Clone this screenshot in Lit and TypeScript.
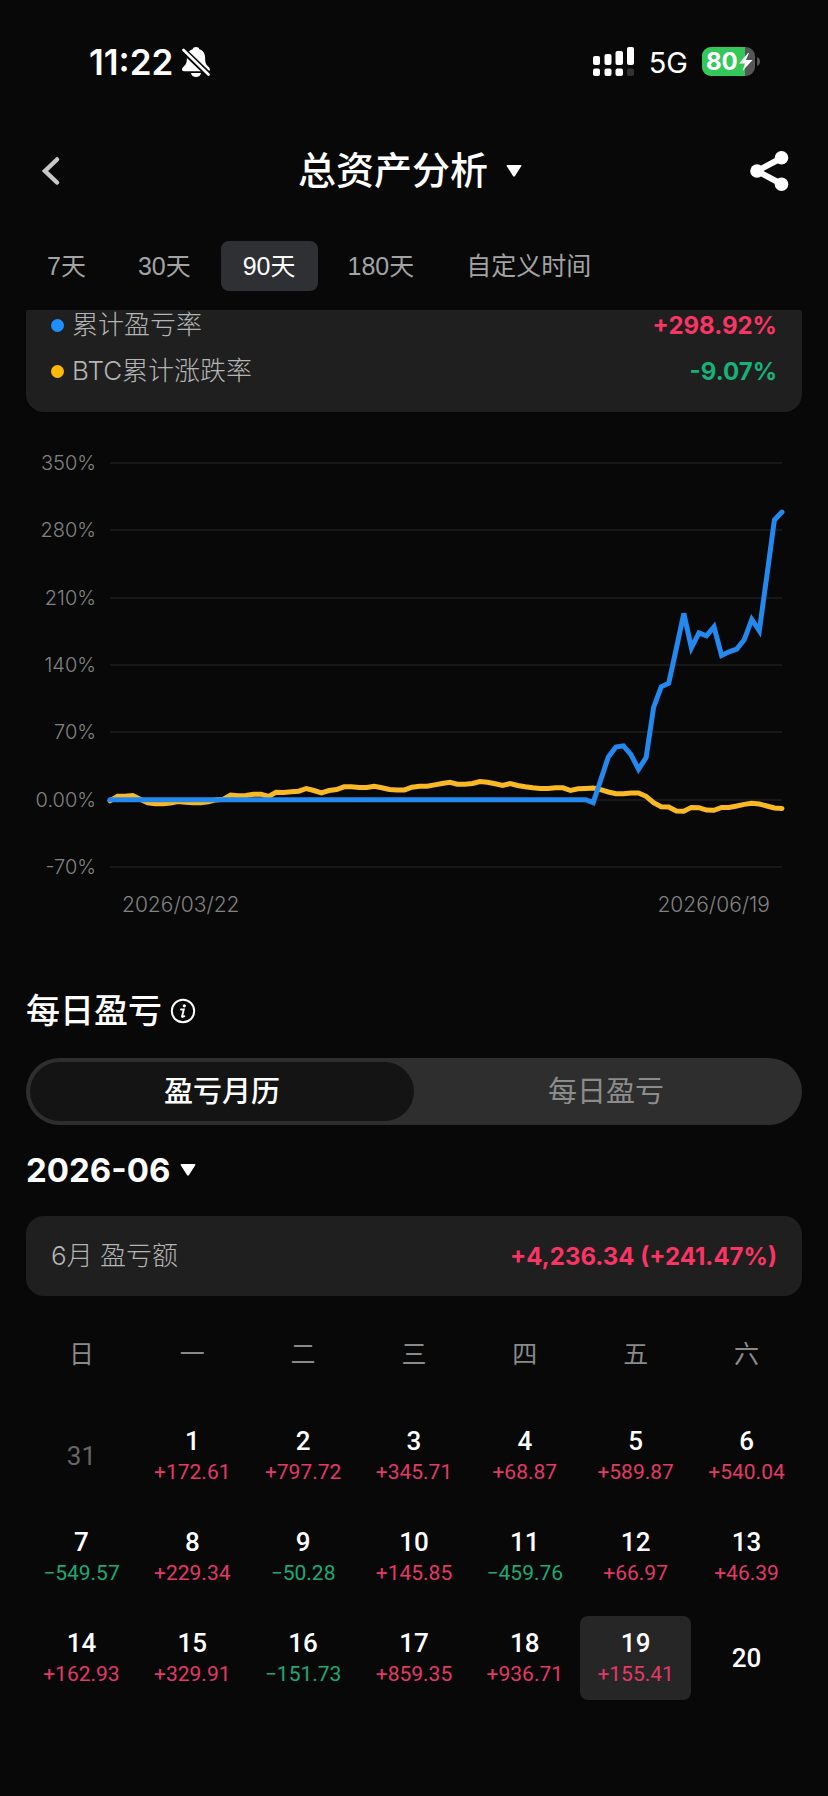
import { LitElement, html, css, svg } from "lit";
import { customElement, state } from "lit/decorators.js";
import { classMap } from "lit/directives/class-map.js";

interface Day {
  day: number;
  amount?: string;
  muted?: boolean;
}

const RANGES = ["7天", "30天", "90天", "180天", "自定义时间"];
const WEEKDAYS = ["日", "一", "二", "三", "四", "五", "六"];

const WEEKS: Day[][] = [
  [
    { day: 31, muted: true },
    { day: 1, amount: "+172.61" },
    { day: 2, amount: "+797.72" },
    { day: 3, amount: "+345.71" },
    { day: 4, amount: "+68.87" },
    { day: 5, amount: "+589.87" },
    { day: 6, amount: "+540.04" },
  ],
  [
    { day: 7, amount: "-549.57" },
    { day: 8, amount: "+229.34" },
    { day: 9, amount: "-50.28" },
    { day: 10, amount: "+145.85" },
    { day: 11, amount: "-459.76" },
    { day: 12, amount: "+66.97" },
    { day: 13, amount: "+46.39" },
  ],
  [
    { day: 14, amount: "+162.93" },
    { day: 15, amount: "+329.91" },
    { day: 16, amount: "-151.73" },
    { day: 17, amount: "+859.35" },
    { day: 18, amount: "+936.71" },
    { day: 19, amount: "+155.41" },
    { day: 20 },
  ],
];

const TICKS = ["350%", "280%", "210%", "140%", "70%", "0.00%", "-70%"];
const MAX = 350;
const MIN = -70;
const PLOT_W = 672;
const PLOT_H = 404;

// One value per day, in percent.
const PNL: number[] = [
  ...new Array(64).fill(0),
  -3, 20.8, 44.4, 54.8, 55.9, 46.8, 31.6, 43.7, 95.8, 117.3, 121.1, 157, 193.6,
  157.9, 173.5, 170.4, 179.7, 149.9, 153.7, 156.5, 166.2, 187.4, 175.6, 233,
  290.8, 298.92,
];
const BTC: number[] = [
  -1.2, 3.6, 3.6, 4.3, 0.5, -3.3, -4.3, -4.3, -3.6, -1.9, -2.6, -3.3, -3.3,
  -2.3, -0.2, 0.5, 4.7, 4, 4.3, 5.7, 5.7, 3.3, 7.8, 7.5, 8.2, 8.8, 11.6, 9.5,
  7.1, 9.5, 10.6, 13.4, 13.4, 12.7, 12.7, 14, 12.3, 10.6, 9.9, 10.2, 13, 14, 14,
  15.4, 16.8, 17.9, 16.1, 16.1, 16.8, 18.9, 18.2, 16.5, 14.7, 16.8, 14.7, 13.4,
  12.3, 11.6, 11.6, 12.3, 12.3, 9.5, 11.3, 11.6, 12, 10.4, 8, 6.2, 6.2, 6.9,
  6.9, 3.5, -3.1, -7.3, -7.6, -11.8, -12.1, -8, -8.3, -10.8, -11.1, -8, -8,
  -6.6, -4.9, -3.8, -4.5, -6.6, -8.7, -9.07,
];

const toPoints = (values: number[]) =>
  values
    .map((v, i) => {
      const x = (i / (values.length - 1)) * PLOT_W;
      const y = ((MAX - v) / (MAX - MIN)) * PLOT_H;
      return `${x.toFixed(1)},${y.toFixed(1)}`;
    })
    .join(" ");

@customElement("status-bar")
export class StatusBar extends LitElement {
  static styles = css`
    :host {
      display: flex;
      align-items: center;
      justify-content: space-between;
      height: 124px;
      padding: 0 68px 0 89px;
      color: #fff;
      font-family: Inter, "Noto Sans CJK SC", sans-serif;
    }
    .left,
    .right {
      display: flex;
      align-items: center;
    }
    .left {
      gap: 9px;
    }
    .time {
      font-size: 35px;
      font-weight: 600;
    }
    .net {
      margin: 0 14px;
      font-size: 29px;
    }
    .bat-text {
      font: 700 24px Inter, sans-serif;
    }
    svg {
      display: block;
    }
  `;

  render() {
    return html`
      <div class="left">
        <span class="time">11:22</span>
        <svg width="28" height="32" viewBox="0 0 28 32" aria-hidden="true">
          <path
            fill="#fff"
            d="M14 1c-1.900 0-3 .9-3.300 2.200C6.500 4.500 4.900 7.600 4.900 12c0 4.800-1 6.500-3.200 8.600C.7 21.700 0 22.700 0 23.600 0 24.700.8 25.300 2 25.300h24c1.200 0 1.900-.6 1.900-1.700 0-.9-.7-1.900-1.700-3-2.200-2.100-3.100-3.800-3.100-8.600 0-4.400-1.600-7.500-5.800-8.800C17 1.900 15.900 1 14 1Z"
          />
          <path fill="#fff" d="M9 27h10c-.4 2.400-2.300 4-5 4s-4.600-1.600-5-4Z" />
          <path d="M1 4 L27 29" stroke="#080808" stroke-width="6" />
          <path
            d="M1.500 4 L26.500 28.500"
            stroke="#fff"
            stroke-width="2.600"
            stroke-linecap="round"
          />
        </svg>
      </div>
      <div class="right">
        <svg width="42" height="30" viewBox="0 0 42 30" aria-hidden="true">
          <g fill="#fff">
            <rect x="0" y="9" width="7" height="9" rx="2" />
            <rect x="11.500" y="7" width="7" height="11" rx="2" />
            <rect x="22.500" y="4" width="7.500" height="14" rx="2" />
            <rect x="34" y="0" width="7" height="18" rx="2" />
            <rect x="0" y="21.500" width="7" height="7.500" rx="2" />
            <rect x="11.500" y="21.500" width="7" height="7.500" rx="2" />
            <rect x="22.500" y="21.500" width="7.500" height="7.500" rx="2" />
          </g>
          <rect x="34" y="21.500" width="7" height="7.500" rx="2" fill="#333" />
        </svg>
        <span class="net">5G</span>
        <svg width="58" height="30" viewBox="0 0 58 30" role="img" aria-label="80%">
          <defs>
            <clipPath id="bat"><rect width="53" height="29" rx="9" /></clipPath>
          </defs>
          <g clip-path="url(#bat)">
            <rect width="53" height="29" fill="#565658" />
            <rect width="43" height="29" fill="#34c759" />
          </g>
          <path d="M55 10 c4 1.500 4 7.500 0 9Z" fill="#565658" />
          <text class="bat-text" x="4" y="23" fill="#fff">80</text>
          <path
            d="M46 6 L37 16.500 h6 L40.500 24 L50.500 13 h-6.500 L47 6Z"
            fill="#fff"
          />
        </svg>
      </div>
    `;
  }
}

@customElement("return-chart")
export class ReturnChart extends LitElement {
  static styles = css`
    :host {
      display: block;
      padding-right: 20px;
      color: #828282;
      font: 300 20px/24px Inter, "Noto Sans CJK SC", sans-serif;
    }
    .chart {
      display: grid;
      grid-template-columns: 70px 1fr;
      column-gap: 14px;
    }
    .ticks {
      display: flex;
      flex-direction: column;
      justify-content: space-between;
      text-align: right;
    }
    .plot {
      display: block;
      width: 100%;
      height: 404px;
      margin: 12px 0;
      overflow: visible;
    }
    .grid {
      stroke: #181818;
      stroke-width: 2;
    }
    .line {
      fill: none;
      stroke-width: 5;
      stroke-linecap: round;
      stroke-linejoin: miter;
    }
    .btc {
      stroke: #f8b924;
    }
    .pnl {
      stroke: #2489ee;
    }
    .dates {
      grid-column: 2;
      display: flex;
      justify-content: space-between;
      margin-top: 14px;
      padding: 0 12px;
      font-size: 21px;
    }
  `;

  render() {
    return html`
      <div class="chart">
        <div class="ticks">${TICKS.map((t) => html`<span>${t}</span>`)}</div>
        <svg
          class="plot"
          viewBox="0 0 ${PLOT_W} ${PLOT_H}"
          preserveAspectRatio="none"
          role="img"
          aria-label="累计盈亏率"
        >
          ${TICKS.map((_, i) => {
            const y = Math.round((i * PLOT_H) / (TICKS.length - 1));
            return svg`<line class="grid" x1="0" x2=${PLOT_W} y1=${y} y2=${y} />`;
          })}
          <polyline class="line btc" points=${toPoints(BTC)} />
          <polyline class="line pnl" points=${toPoints(PNL)} />
        </svg>
        <div class="dates"><span>2026/03/22</span><span>2026/06/19</span></div>
      </div>
    `;
  }
}

@customElement("profit-calendar")
export class ProfitCalendar extends LitElement {
  @state() private selected = 19;

  static styles = css`
    :host {
      display: block;
    }
    .calendar {
      width: 100%;
      table-layout: fixed;
      border-collapse: separate;
      border-spacing: 0 17px;
    }
    th {
      height: 61px;
      padding: 0;
      vertical-align: top;
      color: #8a8a8a;
      font-size: 25px;
      line-height: 38px;
      font-weight: 400;
    }
    td {
      padding: 0;
    }
    .day {
      display: flex;
      flex-direction: column;
      align-items: center;
      justify-content: center;
      width: 100%;
      height: 84px;
      padding: 0;
      border: 0;
      border-radius: 8px;
      background: none;
      color: #fff;
      font-family: inherit;
      font-size: 26px;
      line-height: 32px;
      font-weight: 500;
    }
    .muted {
      color: #666;
      font-weight: 400;
    }
    .selected {
      background: #262626;
    }
    .amount {
      font-size: 21px;
      line-height: 30px;
      font-weight: 400;
    }
    .up {
      color: #e23a66;
    }
    .down {
      color: #1fa876;
    }
  `;

  render() {
    return html`
      <table class="calendar">
        <thead>
          <tr>
            ${WEEKDAYS.map((w) => html`<th scope="col">${w}</th>`)}
          </tr>
        </thead>
        <tbody>
          ${WEEKS.map(
            (week) => html`<tr>
              ${week.map((d) => html`<td>${this.renderDay(d)}</td>`)}
            </tr>`
          )}
        </tbody>
      </table>
    `;
  }

  private renderDay(d: Day) {
    const selected = d.day === this.selected;
    return html`<button
      type="button"
      class=${classMap({ day: true, muted: !!d.muted, selected })}
      aria-pressed=${selected ? "true" : "false"}
      @click=${() => (this.selected = d.day)}
    >
      <span>${d.day}</span>
      ${d.amount
        ? html`<span
            class=${classMap({
              amount: true,
              up: d.amount.startsWith("+"),
              down: d.amount.startsWith("-"),
            })}
            >${d.amount.replace("-", "\u2212")}</span
          >`
        : null}
    </button>`;
  }
}

@customElement("app-root")
export class AppRoot extends LitElement {
  @state() private range = "90天";
  @state() private view = "盈亏月历";

  static styles = css`
    :host {
      display: block;
      box-sizing: border-box;
      min-height: 100vh;
      background: #080808;
      color: #fff;
      font-family: Roboto, "Noto Sans CJK SC", sans-serif;
    }
    button {
      padding: 0;
      border: 0;
      background: none;
      color: inherit;
      font-family: inherit;
    }
    svg {
      display: block;
    }
    .header {
      display: grid;
      grid-template-columns: 40px 1fr 40px;
      align-items: center;
      height: 94px;
      padding: 0 39px 0 31px;
    }
    .icon-button {
      display: flex;
      align-items: center;
      height: 44px;
    }
    .title-button {
      display: flex;
      align-items: center;
      justify-self: center;
      gap: 18px;
    }
    .title {
      margin: 0;
      font-size: 38px;
      line-height: 48px;
      font-weight: 500;
    }
    .tabs {
      display: flex;
      gap: 8px;
      padding: 23px 25px 19px;
    }
    .tab {
      height: 50px;
      padding: 0 22px;
      border-radius: 8px;
      color: #a3a3a3;
      font-family: "Liberation Sans", "Noto Sans CJK SC", sans-serif;
      font-size: 25px;
      line-height: 50px;
      white-space: nowrap;
    }
    .tab.active {
      background: #2f3034;
      color: #fff;
    }
    .content {
      padding: 0 26px;
    }
    .legend {
      display: flex;
      flex-direction: column;
      gap: 16px;
      padding: 0 25px 26px;
      border-radius: 2px 2px 18px 18px;
      background: #1f1f1f;
    }
    .legend-row {
      display: flex;
      align-items: center;
      height: 30px;
    }
    .dot {
      width: 13px;
      height: 13px;
      margin-right: 8px;
      border-radius: 50%;
    }
    .dot.blue {
      background: #1f8fff;
    }
    .dot.yellow {
      background: #ffb908;
    }
    .label {
      color: #b4b4b4;
      font-family: Inter, "Noto Sans CJK SC", sans-serif;
      font-size: 26px;
      line-height: 30px;
      font-weight: 300;
    }
    .value {
      margin-left: auto;
      font-family: Inter, sans-serif;
      font-size: 24px;
      font-weight: 700;
    }
    .up {
      color: #fa3465;
    }
    .down {
      color: #17b17a;
    }
    return-chart {
      margin-top: 39px;
    }
    .section-head {
      display: flex;
      align-items: center;
      gap: 8px;
      margin-top: 74px;
    }
    .section-title {
      margin: 0;
      font-size: 34px;
      line-height: 40px;
      font-weight: 500;
    }
    .segment {
      display: grid;
      grid-template-columns: 1fr 1fr;
      box-sizing: border-box;
      height: 67px;
      margin-top: 27px;
      padding: 4px;
      border-radius: 34px;
      background: #2e2e2e;
    }
    .segment-item {
      border-radius: 30px;
      color: #8c8c8c;
      font-size: 29px;
      line-height: 36px;
    }
    .segment-item.active {
      background: #141414;
      color: #fff;
      font-weight: 500;
    }
    .month {
      display: flex;
      align-items: center;
      gap: 10px;
      margin-top: 25px;
      font-family: Inter, sans-serif;
      font-size: 33px;
      line-height: 40px;
      font-weight: 700;
    }
    .summary {
      display: flex;
      align-items: center;
      height: 80px;
      margin: 26px 0 23px;
      padding: 0 25px;
      border-radius: 18px;
      background: #1f1f1f;
    }
  `;

  render() {
    return html`
      <status-bar></status-bar>
      <header class="header">
        <button class="icon-button" type="button" aria-label="返回">
          <svg width="32" height="30" viewBox="0 0 32 30">
            <path
              d="M26 3.500 L14 15 L26 26.500"
              fill="none"
              stroke="#c8c8c8"
              stroke-width="4.500"
              stroke-linecap="round"
            />
          </svg>
        </button>
        <button class="title-button" type="button" aria-haspopup="listbox">
          <h1 class="title">总资产分析</h1>
          ${this.caret()}
        </button>
        <button class="icon-button" type="button" aria-label="分享">
          <svg width="40" height="40" viewBox="0 0 40 40">
            <path
              d="M32.500 7 L8 20 L32.500 33"
              fill="none"
              stroke="#fff"
              stroke-width="6"
            />
            <g fill="#fff">
              <circle cx="32.500" cy="6.800" r="6.800" />
              <circle cx="8" cy="20" r="6.800" />
              <circle cx="32.500" cy="33.200" r="6.800" />
            </g>
          </svg>
        </button>
      </header>
      <nav class="tabs">
        ${RANGES.map(
          (r) => html`<button
            type="button"
            class=${classMap({ tab: true, active: r === this.range })}
            aria-pressed=${r === this.range ? "true" : "false"}
            @click=${() => (this.range = r)}
          >
            ${r}
          </button>`
        )}
      </nav>
      <main class="content">
        <section class="legend">
          <div class="legend-row">
            <span class="dot blue"></span>
            <span class="label">累计盈亏率</span>
            <span class="value up">+298.92%</span>
          </div>
          <div class="legend-row">
            <span class="dot yellow"></span>
            <span class="label">BTC累计涨跌率</span>
            <span class="value down">-9.07%</span>
          </div>
        </section>
        <return-chart></return-chart>
        <div class="section-head">
          <h2 class="section-title">每日盈亏</h2>
          <button type="button" aria-label="说明">
            <svg width="26" height="26" viewBox="0 0 26 26">
              <circle cx="13" cy="13" r="11.200" fill="none" stroke="#fff" stroke-width="2" />
              <circle cx="14.300" cy="7.800" r="1.600" fill="#fff" />
              <path
                d="M11 11.500 h2.800 L12 18.500 q0 1 2.300 -.3"
                fill="none"
                stroke="#fff"
                stroke-width="1.900"
                stroke-linecap="round"
              />
            </svg>
          </button>
        </div>
        <div class="segment">
          ${["盈亏月历", "每日盈亏"].map(
            (v) => html`<button
              type="button"
              class=${classMap({ "segment-item": true, active: v === this.view })}
              aria-pressed=${v === this.view ? "true" : "false"}
              @click=${() => (this.view = v)}
            >
              ${v}
            </button>`
          )}
        </div>
        <button class="month" type="button" aria-haspopup="listbox">
          2026-06 ${this.caret()}
        </button>
        <section class="summary">
          <span class="label">6月 盈亏额</span>
          <span class="value up">+4,236.34 (+241.47%)</span>
        </section>
        <profit-calendar></profit-calendar>
      </main>
    `;
  }

  private caret() {
    return html`<svg width="16" height="12" viewBox="0 0 16 12" aria-hidden="true">
      <path
        d="M1.500 0 h13 q1.500 0 .7 1.200 L9 11 q-1 1.300 -2 0 L.8 1.200 q-.8 -1.200 .7 -1.200Z"
        fill="#fff"
      />
    </svg>`;
  }
}
